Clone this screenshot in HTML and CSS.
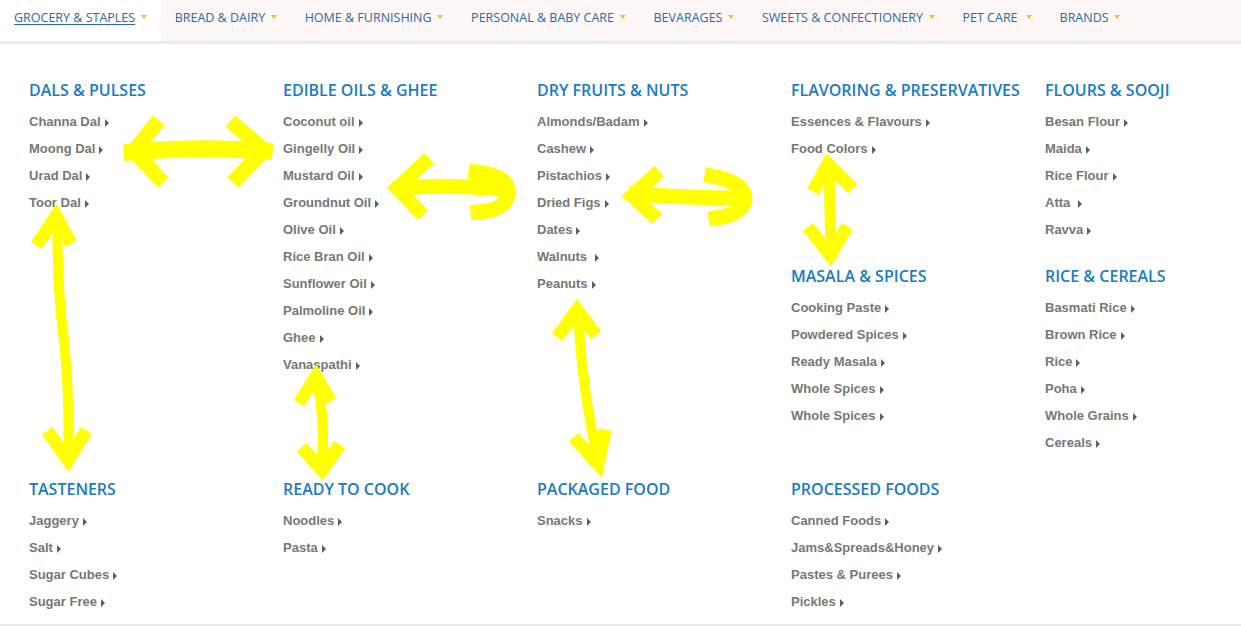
FILE: index.html
```html
<!DOCTYPE html>
<html lang="en">
<head>
<meta charset="utf-8">
<title>Grocery &amp; Staples</title>
<link rel="stylesheet" href="styles.css">
</head>
<body>
<nav class="nav">
  <a class="nav-item active" href="#">GROCERY &amp; STAPLES<span class="caret"></span></a>
  <a class="nav-item" href="#">BREAD &amp; DAIRY<span class="caret"></span></a>
  <a class="nav-item" href="#">HOME &amp; FURNISHING<span class="caret"></span></a>
  <a class="nav-item" href="#">PERSONAL &amp; BABY CARE<span class="caret"></span></a>
  <a class="nav-item" href="#">BEVARAGES<span class="caret"></span></a>
  <a class="nav-item" href="#">SWEETS &amp; CONFECTIONERY<span class="caret"></span></a>
  <a class="nav-item" href="#">PET CARE <span class="caret caret-wide"></span></a>
  <a class="nav-item" href="#">BRANDS<span class="caret"></span></a>
</nav>

<div class="mega">
  <div class="grid">
    <section class="group g-dals">
      <h3>DALS &amp; PULSES</h3>
      <ul><li>Channa Dal</li><li>Moong Dal</li><li>Urad Dal</li><li>Toor Dal</li></ul>
    </section>
    <section class="group g-oils">
      <h3>EDIBLE OILS &amp; GHEE</h3>
      <ul><li>Coconut oil</li><li>Gingelly Oil</li><li>Mustard Oil</li><li>Groundnut Oil</li><li>Olive Oil</li><li>Rice Bran Oil</li><li>Sunflower Oil</li><li>Palmoline Oil</li><li>Ghee</li><li>Vanaspathi</li></ul>
    </section>
    <section class="group g-dry">
      <h3>DRY FRUITS &amp; NUTS</h3>
      <ul><li>Almonds/Badam</li><li>Cashew</li><li>Pistachios</li><li>Dried Figs</li><li>Dates</li><li>Walnuts&nbsp;</li><li>Peanuts</li></ul>
    </section>
    <section class="group g-flav">
      <h3>FLAVORING &amp; PRESERVATIVES</h3>
      <ul><li>Essences &amp; Flavours</li><li>Food Colors</li></ul>
    </section>
    <section class="group g-flour">
      <h3>FLOURS &amp; SOOJI</h3>
      <ul><li>Besan Flour</li><li>Maida</li><li>Rice Flour</li><li>Atta&nbsp;</li><li>Ravva</li></ul>
    </section>
    <section class="group g-masala">
      <h3>MASALA &amp; SPICES</h3>
      <ul><li>Cooking Paste</li><li>Powdered Spices</li><li>Ready Masala</li><li>Whole Spices</li><li>Whole Spices</li></ul>
    </section>
    <section class="group g-rice">
      <h3>RICE &amp; CEREALS</h3>
      <ul><li>Basmati Rice</li><li>Brown Rice</li><li>Rice</li><li>Poha</li><li>Whole Grains</li><li>Cereals</li></ul>
    </section>
    <section class="group g-taste">
      <h3>TASTENERS</h3>
      <ul><li>Jaggery</li><li>Salt</li><li>Sugar Cubes</li><li>Sugar Free</li></ul>
    </section>
    <section class="group g-ready">
      <h3>READY TO COOK</h3>
      <ul><li>Noodles</li><li>Pasta</li></ul>
    </section>
    <section class="group g-pack">
      <h3>PACKAGED FOOD</h3>
      <ul><li>Snacks</li></ul>
    </section>
    <section class="group g-proc">
      <h3>PROCESSED FOODS</h3>
      <ul><li>Canned Foods</li><li>Jams&amp;Spreads&amp;Honey</li><li>Pastes &amp; Purees</li><li>Pickles</li><li>Sauces &amp; Ketchups</li></ul>
    </section>
  </div>
</div>

<svg class="marks" width="1241" height="626" viewBox="0 0 1241 626" aria-hidden="true">
  <g fill="none" stroke="#ffff00" stroke-linecap="square" stroke-linejoin="miter">
    <!-- arrow 1 -->
    <path d="M132 152 Q200 146 264 151" stroke-width="17"/>
    <path d="M154 126 L134 151 L158 177" stroke-width="15"/>
    <path d="M236 126 L264 150 L238 177" stroke-width="15"/>
    <!-- arrow 2 -->
    <path d="M400 188 Q450 184 500 189" stroke-width="15"/>
    <path d="M424 163 L397 188 L418 210" stroke-width="14"/>
    <path d="M476 172 Q510 176 508 194 Q506 210 478 212" stroke-width="15"/>
    <!-- arrow 3 -->
    <path d="M636 194 Q690 198 744 198" stroke-width="15"/>
    <path d="M654 176 L632 196 L652 214" stroke-width="14"/>
    <path d="M712 176 Q744 182 745 198 Q744 214 716 218" stroke-width="15"/>
    <!-- arrow 4 -->
    <path d="M829 166 L831 254" stroke-width="11"/>
    <path d="M816 186 L828 164 L848 184" stroke-width="13"/>
    <path d="M812 232 L830 255 L844 232" stroke-width="13"/>
    <!-- arrow 5 -->
    <path d="M57 218 Q58 300 64 340 Q70 400 68 458" stroke-width="10"/>
    <path d="M40 240 L56 216 L68 238" stroke-width="13"/>
    <path d="M51 436 L68 460 L83 436" stroke-width="13"/>
    <!-- arrow 6 -->
    <path d="M316 378 Q326 420 322 466" stroke-width="10"/>
    <path d="M302 398 L316 376 L328 396" stroke-width="12"/>
    <path d="M306 452 L322 470 L336 450" stroke-width="13"/>
    <!-- arrow 7 -->
    <path d="M578 312 Q582 390 598 460" stroke-width="10"/>
    <path d="M561 332 L577 310 L592 330" stroke-width="13"/>
    <path d="M578 442 L598 464 L604 436" stroke-width="13"/>
  </g>
</svg>
</body>
</html>
```

FILE: styles.css
```css
html, body {
  margin: 0;
  padding: 0;
  background: #ffffff;
}

body {
  position: relative;
  width: 1241px;
  height: 626px;
  overflow: hidden;
  font-family: "Open Sans", "Liberation Sans", sans-serif;
}

/* ---------- top navigation ---------- */
.nav {
  display: flex;
  height: 41px;
  background: #fdf8f7;
  border-bottom: 3px solid #eaeaea;
}

.nav-item {
  display: flex;
  align-items: center;
  height: 34px;
  padding: 0 14px;
  font-size: 12.5px;
  color: #2a6aa6;
  text-decoration: none;
  white-space: nowrap;
}

.nav-item.active {
  background: #ffffff;
  text-decoration: underline;
  text-underline-offset: 2px;
  height: 41px;
  padding-bottom: 7px;
  box-sizing: border-box;
}

.caret {
  display: inline-block;
  width: 0;
  height: 0;
  margin-left: 5.5px;
  border-left: 3.5px solid transparent;
  border-right: 3.5px solid transparent;
  border-top: 4.5px solid #f4bd2a;
}

.caret-wide {
  margin-left: 8px;
}

/* ---------- mega menu ---------- */
.mega {
  height: 582px;
  box-sizing: border-box;
  overflow: hidden;
  border-bottom: 2px solid #ececec;
  padding: 34px 0 0 29px;
}

.grid {
  display: grid;
  grid-template-columns: repeat(5, 254px);
  row-gap: 21px;
  align-items: start;
}

.group h3 {
  margin: 0 0 5px;
  height: 25px;
  line-height: 25px;
  font-family: "Open Sans", sans-serif;
  font-weight: 600;
  font-size: 16px;
  color: #1a7cc0;
  white-space: nowrap;
}

.group ul {
  list-style: none;
  margin: 0;
  padding: 0;
}

.group li {
  height: 27px;
  line-height: 27px;
  font-family: "Liberation Sans", Arial, sans-serif;
  font-weight: bold;
  font-size: 13px;
  color: #777777;
  white-space: pre;
}

.group li::after {
  content: "";
  display: inline-block;
  width: 0;
  height: 0;
  margin-left: 4px;
  border-top: 4px solid transparent;
  border-bottom: 4px solid transparent;
  border-left: 4px solid #5e5e5e;
  vertical-align: -0.5px;
}

.g-dals   { grid-column: 1; grid-row: 1 / 3; }
.g-oils   { grid-column: 2; grid-row: 1 / 3; }
.g-dry    { grid-column: 3; grid-row: 1 / 3; }
.g-flav   { grid-column: 4; grid-row: 1; }
.g-flour  { grid-column: 5; grid-row: 1; }
.g-masala { grid-column: 4; grid-row: 2; }
.g-rice   { grid-column: 5; grid-row: 2; }
.g-taste  { grid-column: 1; grid-row: 3; }
.g-ready  { grid-column: 2; grid-row: 3; }
.g-pack   { grid-column: 3; grid-row: 3; }
.g-proc   { grid-column: 4; grid-row: 3; }

/* ---------- yellow annotation marks drawn over the page ---------- */
.marks {
  position: absolute;
  left: 0;
  top: 0;
  pointer-events: none;
}
```
